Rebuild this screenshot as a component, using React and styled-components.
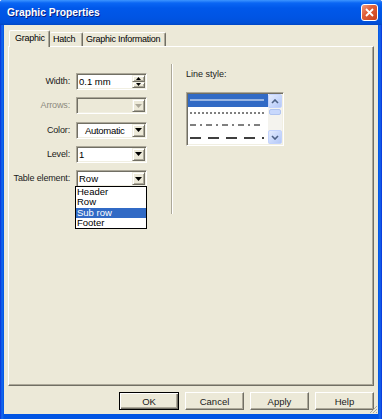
import React from "react";
import styled, { createGlobalStyle } from "styled-components";

const GlobalStyle = createGlobalStyle`
  html, body { margin: 0; padding: 0; background: #ffffff; }
  body { font-family: "Liberation Sans", Arial, sans-serif; font-size: 9px; color: #000; }
  * { box-sizing: border-box; }
`;

const Frame = styled.div`
  width: 382px;
  height: 419px;
  display: flex;
  flex-direction: column;
  background: linear-gradient(to right, #0831d9 0px, #166aee 2px, #0054e3 4px, #0054e3 378px, #166aee 380px, #0831d9 382px);
  border-radius: 3px 3px 0 0;
  overflow: hidden;
`;

const TitleBar = styled.div`
  height: 25px;
  flex: none;
  display: flex;
  align-items: center;
  justify-content: space-between;
  padding: 0 4px 0 7px;
  background: linear-gradient(to bottom, #3d95ff 0px, #0a66f4 3px, #0058ea 8px, #0054e3 18px, #0050d8 23px, #0046c4 25px);
  color: #ffffff;
  font-weight: bold;
  font-size: 10.3px;
  text-shadow: 1px 1px 0 #0a1e80;
`;

const CloseButton = styled.div`
  width: 17px;
  height: 17px;
  border: 1px solid #ffffff;
  border-radius: 3px;
  background: linear-gradient(135deg, #f09b80 0%, #e0603a 40%, #c8401c 100%);
  display: flex;
  align-items: center;
  justify-content: center;
`;

const Body = styled.div`
  position: relative;
  flex: 1;
  margin: 0 4px 5px;
  background: #ece9d8;
  padding: 5px 4px 0;
  display: flex;
  flex-direction: column;
`;

const TabStrip = styled.div`
  height: 16px;
  flex: none;
  display: flex;
  align-items: flex-end;
  padding-left: 1px;
  position: relative;
  z-index: 1;
`;

const Tab = styled.div`
  width: ${(p) => p.$w}px;
  height: ${(p) => (p.$active ? 17 : 14)}px;
  padding-left: ${(p) => p.$pad}px;
  line-height: ${(p) => (p.$active ? 14 : 13)}px;
  letter-spacing: -0.25px;
  background: #ece9d8;
  border-top: 1px solid #ffffff;
  border-left: ${(p) => (p.$first || p.$active ? "1px solid #ffffff" : "none")};
  border-right: 1px solid #716f64;
  box-shadow: inset -1px 0 0 #aca899;
  margin-bottom: ${(p) => (p.$active ? -1 : 0)}px;
  border-radius: 2px 2px 0 0;
  white-space: nowrap;
  overflow: hidden;
`;

const Panel = styled.div`
  flex: none;
  height: 340px;
  background: #ece9d8;
  border-top: 1px solid #ffffff;
  border-left: 1px solid #ffffff;
  border-right: 1px solid #716f64;
  border-bottom: 1px solid #716f64;
  box-shadow: inset -1px -1px 0 #aca899;
  display: flex;
  align-items: flex-start;
`;

const LeftColumn = styled.div`
  width: 162px;
  padding-top: 26px;
`;

const FormGrid = styled.div`
  display: grid;
  grid-template-columns: 61px 71px;
  grid-auto-rows: 17px;
  column-gap: 6px;
  row-gap: 7.25px;
`;

const Label = styled.div`
  text-align: right;
  line-height: 17px;
  white-space: nowrap;
  letter-spacing: -0.15px;
  color: ${(p) => (p.$disabled ? "#8c8a7e" : "#1a1a1a")};
`;

const Field = styled.div`
  position: relative;
  height: 17px;
  display: flex;
  align-items: center;
  background: ${(p) => (p.$disabled ? "#ece9d8" : "#ffffff")};
  border-top: 1px solid #aca899;
  border-left: 1px solid #aca899;
  border-right: 1px solid #ffffff;
  border-bottom: 1px solid #ffffff;
  box-shadow: inset 1px 1px 0 #716f64, inset -1px -1px 0 #f1efe2;
  padding: 1px;
`;

const FieldText = styled.span`
  flex: 1;
  padding-left: ${(p) => p.$indent || 1}px;
  font-size: 9.5px;
  line-height: 13px;
  white-space: nowrap;
  overflow: hidden;
  letter-spacing: ${(p) => (p.$indent ? "-0.3px" : "0")};
`;

const ArrowButton = styled.div`
  width: 13px;
  height: 13px;
  flex: none;
  display: flex;
  align-items: center;
  justify-content: center;
  background: #ece9d8;
  border-top: 1px solid #f1efe2;
  border-left: 1px solid #f1efe2;
  border-right: 1px solid #716f64;
  border-bottom: 1px solid #716f64;
  box-shadow: inset 1px 1px 0 #ffffff, inset -1px -1px 0 #aca899;
`;

const SpinStack = styled.div`
  width: 13px;
  height: 13px;
  flex: none;
  display: flex;
  flex-direction: column;
`;

const SpinButton = styled(ArrowButton)`
  height: 6.5px;
  width: 13px;
`;

const DropList = styled.div`
  position: absolute;
  top: 15px;
  left: -2px;
  width: 72px;
  height: 43px;
  background: #ffffff;
  border: 1px solid #000000;
  z-index: 2;
`;

const DropItem = styled.div`
  height: 10.25px;
  line-height: 10.25px;
  padding-left: 1px;
  font-size: 9.5px;
  background: ${(p) => (p.$selected ? "#316ac5" : "transparent")};
  color: ${(p) => (p.$selected ? "#ffffff" : "#000")};
`;

const Separator = styled.div`
  width: 2px;
  height: 150px;
  margin-top: 17px;
  border-left: 1px solid #aca899;
  border-right: 1px solid #ffffff;
`;

const RightColumn = styled.div`
  padding: 22px 0 0 13px;
`;

const GroupLabel = styled.div`
  line-height: 10px;
  height: 10px;
  color: #1a1a1a;
`;

const ListBox = styled.div`
  margin-top: 13px;
  width: 98px;
  height: 54px;
  display: flex;
  background: #ffffff;
  border-top: 1px solid #aca899;
  border-left: 1px solid #aca899;
  border-right: 1px solid #ffffff;
  border-bottom: 1px solid #ffffff;
  box-shadow: inset 1px 1px 0 #716f64, inset -1px -1px 0 #f1efe2;
  padding: 1px;
`;

const LineList = styled.div`
  flex: 1;
  display: flex;
  flex-direction: column;
`;

const LineItem = styled.div`
  height: 12.5px;
  display: flex;
  align-items: center;
  padding-left: 2px;
  background: ${(p) => (p.$selected ? "#316ac5" : "transparent")};
`;

const ScrollBar = styled.div`
  width: 14px;
  flex: none;
  display: flex;
  flex-direction: column;
  background: #f4f3ee;
`;

const ScrollArrow = styled.div`
  width: 14px;
  height: 14px;
  flex: none;
  display: flex;
  align-items: center;
  justify-content: center;
  border: 1px solid #c3d3fd;
  border-radius: 2px;
  background: linear-gradient(135deg, #e4ecfd 0%, #c6d6fb 60%, #b4c8f6 100%);
`;

const ScrollTrack = styled.div`
  flex: 1;
  padding-top: 1px;
`;

const ScrollThumb = styled.div`
  height: 6px;
  margin: 0 1px;
  border: 1px solid #b0c4f0;
  border-radius: 2px;
  background: #c8d8fc;
`;

const ButtonRow = styled.div`
  display: flex;
  justify-content: flex-end;
  gap: 6px;
  margin-top: 6px;
`;

const Button = styled.div`
  width: ${(p) => p.$w || 59}px;
  height: 18px;
  display: flex;
  align-items: center;
  justify-content: center;
  font-size: 9.5px;
  color: #1a1a1a;
  background: #ece9d8;
  border-top: 1px solid ${(p) => (p.$default ? "#000" : "#ffffff")};
  border-left: 1px solid ${(p) => (p.$default ? "#000" : "#ffffff")};
  border-right: 1px solid ${(p) => (p.$default ? "#000" : "#716f64")};
  border-bottom: 1px solid ${(p) => (p.$default ? "#000" : "#716f64")};
  box-shadow: ${(p) =>
    p.$default
      ? "inset 1px 1px 0 #ffffff, inset -1px -1px 0 #716f64, inset -2px -2px 0 #aca899"
      : "inset -1px -1px 0 #aca899"};
`;

const Grip = styled.svg`
  position: absolute;
  right: 0;
  bottom: 0;
`;

const DownTriangle = ({ color = "#000" }) => (
  <svg width="7" height="4" viewBox="0 0 7 4">
    <path d="M0 0h7L3.5 4z" fill={color} />
  </svg>
);

const UpTriangle = () => (
  <svg width="5" height="3" viewBox="0 0 5 3">
    <path d="M2.5 0L5 3H0z" fill="#000" />
  </svg>
);

const SmallDown = () => (
  <svg width="5" height="3" viewBox="0 0 5 3">
    <path d="M0 0h5L2.5 3z" fill="#000" />
  </svg>
);

const Chevron = ({ up }) => (
  <svg width="8" height="5" viewBox="0 0 8 5">
    <path
      d={up ? "M1 4L4 1L7 4" : "M1 1L4 4L7 1"}
      fill="none"
      stroke="#4d6185"
      strokeWidth="1.6"
    />
  </svg>
);

const lineStyles = [
  { dash: "", selected: true },
  { dash: "2 2" },
  { dash: "6 4 2 4" },
  { dash: "11 7" },
];

const tableItems = ["Header", "Row", "Sub row", "Footer"];

export default function App() {
  return (
    <>
      <GlobalStyle />
      <Frame>
        <TitleBar>
          <span>Graphic Properties</span>
          <CloseButton>
            <svg width="9" height="9" viewBox="0 0 9 9">
              <path d="M1 1L8 8M8 1L1 8" stroke="#ffffff" strokeWidth="1.8" />
            </svg>
          </CloseButton>
        </TitleBar>
        <Body>
          <TabStrip>
            <Tab $active $first $w={41} $pad={5}>
              Graphic
            </Tab>
            <Tab $w={33} $pad={3}>
              Hatch
            </Tab>
            <Tab $w={83} $pad={3}>
              Graphic Information
            </Tab>
          </TabStrip>
          <Panel>
            <LeftColumn>
              <FormGrid>
                <Label>Width:</Label>
                <Field>
                  <FieldText>0.1 mm</FieldText>
                  <SpinStack>
                    <SpinButton>
                      <UpTriangle />
                    </SpinButton>
                    <SpinButton>
                      <SmallDown />
                    </SpinButton>
                  </SpinStack>
                </Field>
                <Label $disabled>Arrows:</Label>
                <Field $disabled>
                  <FieldText />
                  <ArrowButton>
                    <DownTriangle color="#aca899" />
                  </ArrowButton>
                </Field>
                <Label>Color:</Label>
                <Field>
                  <FieldText $indent={7}>Automatic</FieldText>
                  <ArrowButton>
                    <DownTriangle />
                  </ArrowButton>
                </Field>
                <Label>Level:</Label>
                <Field>
                  <FieldText>1</FieldText>
                  <ArrowButton>
                    <DownTriangle />
                  </ArrowButton>
                </Field>
                <Label>Table element:</Label>
                <Field>
                  <FieldText>Row</FieldText>
                  <ArrowButton>
                    <DownTriangle />
                  </ArrowButton>
                  <DropList>
                    {tableItems.map((t) => (
                      <DropItem key={t} $selected={t === "Sub row"}>
                        {t}
                      </DropItem>
                    ))}
                  </DropList>
                </Field>
              </FormGrid>
            </LeftColumn>
            <Separator />
            <RightColumn>
              <GroupLabel>Line style:</GroupLabel>
              <ListBox>
                <LineList>
                  {lineStyles.map((l, i) => (
                    <LineItem key={i} $selected={l.selected}>
                      <svg width="74" height="2" viewBox="0 0 74 2">
                        <line
                          x1="0"
                          y1="1"
                          x2="74"
                          y2="1"
                          stroke={l.selected ? "#ffffff" : "#000000"}
                          strokeWidth={i === 3 ? 1.4 : 1}
                          strokeDasharray={l.dash || undefined}
                        />
                      </svg>
                    </LineItem>
                  ))}
                </LineList>
                <ScrollBar>
                  <ScrollArrow>
                    <Chevron up />
                  </ScrollArrow>
                  <ScrollTrack>
                    <ScrollThumb />
                  </ScrollTrack>
                  <ScrollArrow>
                    <Chevron />
                  </ScrollArrow>
                </ScrollBar>
              </ListBox>
            </RightColumn>
          </Panel>
          <ButtonRow>
            <Button $default $w={60}>OK</Button>
            <Button>Cancel</Button>
            <Button>Apply</Button>
            <Button>Help</Button>
          </ButtonRow>
          <Grip width="10" height="10" viewBox="0 0 10 10">
            <path
              d="M9 2L2 9M9 5L5 9M9 8L8 9"
              stroke="#aca899"
              strokeWidth="1"
            />
          </Grip>
        </Body>
      </Frame>
    </>
  );
}
